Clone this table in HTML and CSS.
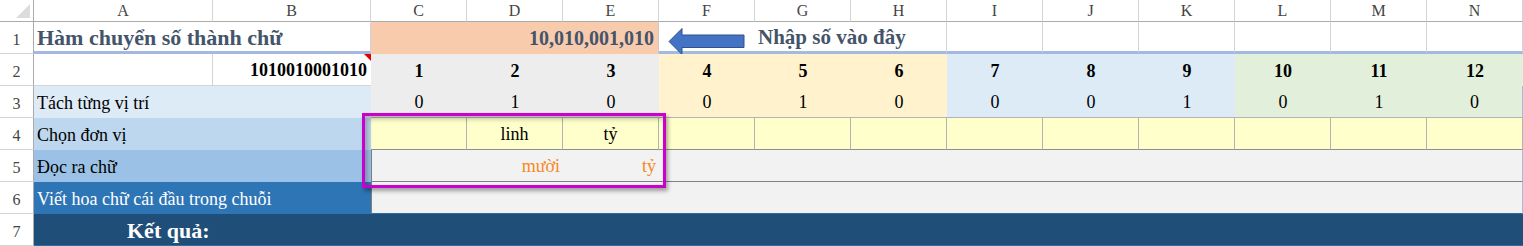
FILE: index.html
```html
<!DOCTYPE html>
<html lang="vi">
<head>
<meta charset="utf-8">
<title>Hàm chuyển số thành chữ</title>
<link rel="stylesheet" href="styles.css">
</head>
<body>
<div class="sheet">
  <div class="grid">
    <!-- header row -->
    <div class="corner"><span class="corner-tri"></span></div>
    <div class="ch">A</div><div class="ch">B</div><div class="ch">C</div><div class="ch">D</div>
    <div class="ch">E</div><div class="ch">F</div><div class="ch">G</div><div class="ch">H</div>
    <div class="ch">I</div><div class="ch">J</div><div class="ch">K</div><div class="ch">L</div>
    <div class="ch">M</div><div class="ch">N</div>

    <!-- row 1 -->
    <div class="rh">1</div>
    <div class="c span2 title blue-under">Hàm chuyển số thành chữ</div>
    <div class="c span3 input-num">10,010,001,010</div>
    <div class="c arrow-cell blue-under">
      <svg width="96" height="32" viewBox="0 0 96 32" aria-hidden="true">
        <polygon points="10,19.5 23,6.5 23,13 85,13 85,25.5 23,25.5 23,32.5" fill="#4472C4" stroke="#2F528F" stroke-width="1"/>
      </svg>
    </div>
    <div class="c span2 hint blue-under">Nhập số vào đây</div>
    <div class="c blue-under"></div><div class="c blue-under"></div><div class="c blue-under"></div>
    <div class="c blue-under"></div><div class="c blue-under"></div><div class="c blue-under"></div>

    <!-- row 2 -->
    <div class="rh">2</div>
    <div class="c plain"></div>
    <div class="c plain bin">1010010001010<span class="comment-tri"></span></div>
    <div class="c pos g1 b">1</div><div class="c pos g1 b">2</div><div class="c pos g1 b">3</div>
    <div class="c pos g2 b">4</div><div class="c pos g2 b">5</div><div class="c pos g2 b">6</div>
    <div class="c pos g3 b">7</div><div class="c pos g3 b">8</div><div class="c pos g3 b">9</div>
    <div class="c pos g4 b">10</div><div class="c pos g4 b">11</div><div class="c pos g4 b">12</div>

    <!-- row 3 -->
    <div class="rh">3</div>
    <div class="c span2 label l3">Tách từng vị trí</div>
    <div class="c pos g1 r3">0</div><div class="c pos g1 r3">1</div><div class="c pos g1 r3">0</div>
    <div class="c pos g2 r3">0</div><div class="c pos g2 r3">1</div><div class="c pos g2 r3">0</div>
    <div class="c pos g3 r3">0</div><div class="c pos g3 r3">0</div><div class="c pos g3 r3">1</div>
    <div class="c pos g4 r3">0</div><div class="c pos g4 r3">1</div><div class="c pos g4 r3 last">0</div>

    <!-- row 4 -->
    <div class="rh">4</div>
    <div class="c span2 label l4">Chọn đơn vị</div>
    <div class="c unit"></div><div class="c unit">linh</div><div class="c unit">tỷ</div>
    <div class="c unit"></div><div class="c unit"></div><div class="c unit"></div>
    <div class="c unit"></div><div class="c unit"></div><div class="c unit"></div>
    <div class="c unit"></div><div class="c unit"></div><div class="c unit last"></div>

    <!-- row 5 -->
    <div class="rh">5</div>
    <div class="c span2 label l5">Đọc ra chữ</div>
    <div class="c word first"></div><div class="c word">mười</div><div class="c word">tỷ</div>
    <div class="c word"></div><div class="c word"></div><div class="c word"></div>
    <div class="c word"></div><div class="c word"></div><div class="c word"></div>
    <div class="c word"></div><div class="c word"></div><div class="c word last"></div>

    <!-- row 6 -->
    <div class="rh">6</div>
    <div class="c span2 label l6">Viết hoa chữ cái đầu trong chuỗi</div>
    <div class="c span12 cap"></div>

    <!-- row 7 -->
    <div class="rh">7</div>
    <div class="c span14 result">Kết quả:</div>
  </div>
  <div class="highlight"></div>
</div>
</body>
</html>
```

FILE: styles.css
```css
* { box-sizing: border-box; }

html, body {
  margin: 0;
  padding: 0;
  background: #ffffff;
}

body {
  font-family: "Liberation Serif", "Times New Roman", serif;
  color: #000;
}

.sheet {
  position: relative;
  width: 1523px;
  height: 246px;
  overflow: hidden;
}

.grid {
  display: grid;
  grid-template-columns: 34px 179px 158px repeat(12, 96px);
  grid-template-rows: 22px repeat(7, 32px);
}

/* headers */
.corner {
  border-right: 1px solid #ababab;
  border-bottom: 1px solid #ababab;
  display: flex;
  align-items: flex-end;
  justify-content: flex-end;
  padding: 0 3px 3px 0;
}
.corner-tri {
  width: 14px;
  height: 14px;
  background: #dcdcdc;
  clip-path: polygon(100% 0, 100% 100%, 0 100%);
}
.ch {
  border-right: 1px solid #d4d4d4;
  border-bottom: 1px solid #ababab;
  display: flex;
  align-items: center;
  justify-content: center;
  font-size: 16px;
  color: #444;
  padding-top: 1px;
}
.rh {
  border-right: 1px solid #ababab;
  border-bottom: 1px solid #d4d4d4;
  display: flex;
  align-items: flex-end;
  justify-content: center;
  font-size: 16px;
  color: #444;
  padding-bottom: 4px;
}

/* cells */
.c {
  border-right: 1px solid #d4d4d4;
  border-bottom: 1px solid #d4d4d4;
  display: flex;
  align-items: center;
  font-size: 18px;
  white-space: nowrap;
  min-width: 0;
  position: relative;
}
.span2 { grid-column: span 2; }
.span3 { grid-column: span 3; }
.span12 { grid-column: span 12; }
.span14 { grid-column: span 14; }

/* row 1 */
.blue-under { border-bottom: 3px solid #a4b9e2; }
.title {
  font-size: 22px;
  font-weight: bold;
  color: #44546a;
  padding: 2px 0 0 3px;
}
.input-num {
  background: #f8cbad;
  border-right: 1px solid #c9c9c9;
  border-bottom: 1px solid #f8cbad;
  justify-content: flex-end;
  font-size: 20px;
  font-weight: bold;
  color: #44546a;
  padding: 2px 4px 0 0;
}
.arrow-cell { border-right: none; padding: 0; align-items: flex-start; }
.arrow-cell svg { display: block; }
.hint {
  font-size: 21px;
  font-weight: bold;
  color: #44546a;
  padding: 2px 0 0 3px;
}

/* row 2 */
.plain { background: #fff; }
.bin {
  justify-content: flex-end;
  font-weight: bold;
  padding: 2px 4px 0 0;
  border-right: none;
}
.comment-tri {
  position: absolute;
  top: 0;
  right: 0;
  width: 7px;
  height: 7px;
  background: #e00000;
  clip-path: polygon(0 0, 100% 0, 100% 100%);
}
.pos {
  justify-content: center;
  border-right: none;
  border-bottom: none;
  padding-top: 2px;
}
.b { font-weight: bold; }
.g1 { background: #ededed; }
.g2 { background: #fff2cc; }
.g3 { background: #ddebf7; }
.g4 { background: #e2efda; }
.r3 { border-bottom: 1px solid #b4b4b4; }
.last { border-right: 1px solid #a9bce0; }

/* labels column */
.label {
  padding: 2px 0 0 3px;
  border-right: none;
  border-bottom: none;
}
.l3 { background: #ddebf7; }
.l4 { background: #bdd7ee; }
.l5 { background: #9bc2e6; }
.l6 { background: #2e75b6; color: #fff; }

/* row 4 */
.unit {
  background: #ffffcc;
  border-right: 1px solid #b2b2b2;
  border-bottom: 1px solid #8e8e8e;
  justify-content: center;
  padding-top: 2px;
}

/* row 5 */
.word {
  background: #f2f2f2;
  border-right: none;
  border-bottom: 1px solid #808080;
  justify-content: flex-end;
  align-items: flex-end;
  color: #f7891f;
  padding: 0 3px 4px 0;
}
.word.first { border-left: 1px solid #808080; }
.word.last { border-right: 1px solid #a9bce0; }

/* row 6 */
.cap {
  background: #f2f2f2;
  border-left: 1px solid #808080;
  border-right: 1px solid #a9bce0;
  border-bottom: 1px solid #2e6ca4;
}

/* row 7 */
.result {
  background: #1f4e78;
  color: #fff;
  font-size: 22px;
  font-weight: bold;
  padding: 2px 0 0 93px;
  border-right: none;
  border-bottom: 1px solid #2e6ca4;
}

/* magenta callout box */
.highlight {
  position: absolute;
  left: 362px;
  top: 113px;
  width: 304px;
  height: 75px;
  border: 3px solid #cc00cc;
  box-shadow: 2px 3px 4px rgba(0, 0, 0, 0.35), inset 3px 3px 5px rgba(0, 0, 0, 0.25);
  pointer-events: none;
}
```
